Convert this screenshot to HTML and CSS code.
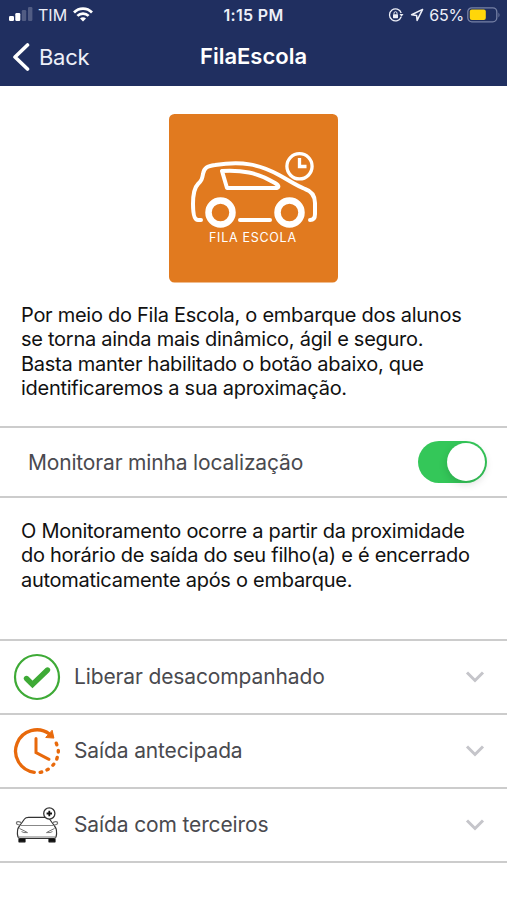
FILE: index.html
```
<!DOCTYPE html>
<html lang="pt-BR">
<head>
    <meta charset="UTF-8">
    <meta name="viewport" content="width=device-width, initial-scale=1.0">
    <title>FilaEscola</title>
    <link rel="stylesheet" href="styles.css">
</head>

<body>
    <header class="header">
        <div class="status">
            <div class="status_left">
                <svg class="icon_signal" width="24" height="16" viewBox="0 0 24 16" fill="#fff">
                    <rect x="0" y="9" width="5" height="5" rx="1.2"/>
                    <rect x="6.3" y="6" width="5" height="8" rx="1.2"/>
                    <rect x="12.8" y="3" width="4.4" height="11" rx="1.2" opacity=".22"/>
                    <rect x="19" y="0" width="4.4" height="14" rx="1.2" opacity=".22"/>
                </svg>
                <span class="status_carrier">TIM</span>
                <svg class="icon_wifi" width="20" height="16" viewBox="0 0 20 16" fill="none" stroke="#fff" stroke-width="2.7">
                    <path d="M1 5.500C6 .4 14 .4 19 5.500"/>
                    <path d="M4.4 8.900C7.4 5.800 12.6 5.800 15.6 8.900"/>
                    <path d="M10 14.400l-3-3c1.700-1.600 4.300-1.600 6 0z" fill="#fff" stroke="none"/>
                </svg>
            </div>
            <span class="status_time">1:15 PM</span>
            <div class="status_right">
                <svg class="icon_lock" width="16" height="16" viewBox="0 0 16 16" fill="none" stroke="#eef0f8" stroke-width="1.3">
                    <path d="M13.2 9.8A6 6 0 1 1 13.2 6"/>
                    <path d="M11.5 7h4l-2 2.8z" fill="#eef0f8" stroke="none"/>
                    <rect x="5" y="7.2" width="5" height="4" rx=".6" fill="#eef0f8" stroke="none"/>
                    <path d="M6 7.5V6.2a1.5 1.5 0 0 1 3 0v1.3" stroke-width="1"/>
                </svg>
                <svg class="icon_arrow" width="14" height="14" viewBox="0 0 14 14" fill="none" stroke="#eef0f8" stroke-width="1.5" stroke-linejoin="round">
                    <path d="M12.6 1.4L1.6 6.7l5 .7.5 5z"/>
                </svg>
                <span class="status_percent">65%</span>
                <svg class="icon_battery" width="34" height="16" viewBox="0 0 34 16">
                    <rect x=".8" y=".8" width="29" height="14" rx="4" fill="none" stroke="#7681a5" stroke-width="1.3"/>
                    <rect x="2.8" y="2.6" width="16" height="10.4" rx="2" fill="#ffd60a"/>
                    <path d="M31.5 5.5q2 2.500 0 5z" fill="#7681a5"/>
                </svg>
            </div>
        </div>
        <div class="navbar">
            <a class="navbar_back">
                <svg width="18" height="30" viewBox="0 0 18 30" fill="none" stroke="#fff" stroke-width="3.6" stroke-linecap="round" stroke-linejoin="round">
                    <path d="M15.5 3L3 15l12.5 12"/>
                </svg>
                <span>Back</span>
            </a>
            <h1 class="navbar_title">FilaEscola</h1>
        </div>
    </header>

    <main>
        <svg class="logo" width="169" height="169" viewBox="0 0 169 169">
            <rect width="169" height="168.500" rx="5.5" fill="#e17a1f"/>
            <g fill="none" stroke="#fff" stroke-width="4" stroke-linecap="round" stroke-linejoin="round">
                <path d="M32 106h-3c-4 0-5-8-5-16 0-9 1-16 5-20 4-4 4-5 5-10 1-6 4-8 12-9 27-4 44-1 64 10 11 6 18 11 26 14 9 3 10 9 10 14v11q0 6-5 6"/>
                <path d="M53 57c19-1 35 1 53 12 5 3 4 5 0 5H58z"/>
                <path d="M71 106h30"/>
                <circle cx="51.5" cy="98.5" r="12" stroke-width="6.5"/>
                <circle cx="120.500" cy="98.5" r="12" stroke-width="6.5"/>
                <circle cx="130.500" cy="52.3" r="12.6" stroke-width="3.3"/>
                <path d="M130.500 44v8.500h7" stroke-width="3.3" stroke-linecap="butt" stroke-linejoin="miter"/>
            </g>
            <text class="logo_text" x="40" y="127.500" textLength="87">FILA ESCOLA</text>
        </svg>

        <p class="text">
            <span class="line">Por meio do Fila Escola, o embarque dos alunos</span>
            <span class="line">se torna ainda mais dinâmico, ágil e seguro.</span>
            <span class="line">Basta manter habilitado o botão abaixo, que</span>
            <span class="line">identificaremos a sua aproximação.</span>
        </p>

        <div class="monitor">
            <span class="monitor_label">Monitorar minha localização</span>
            <div class="switch"><div class="switch_knob"></div></div>
        </div>

        <p class="text text_info">
            <span class="line">O Monitoramento ocorre a partir da proximidade</span>
            <span class="line">do horário de saída do seu filho(a) e é encerrado</span>
            <span class="line">automaticamente após o embarque.</span>
        </p>

        <div class="options">
            <div class="option">
                <svg class="option_icon" width="48" height="48" viewBox="0 0 48 48" fill="none">
                    <circle cx="24" cy="24" r="22" stroke="#3eaa36" stroke-width="2.2"/>
                    <path d="M13.5 25.500l6 6L34.5 17" stroke="#3eaa36" stroke-width="5.4" stroke-linecap="round"/>
                </svg>
                <span class="option_label">Liberar desacompanhado</span>
                <svg class="chevron" width="20" height="14" viewBox="0 0 20 14"><path d="M2 2.500l8 8 8-8"/></svg>
            </div>
            <div class="option">
                <svg class="option_icon" width="48" height="48" viewBox="0 0 48 48" fill="none" stroke="#e8690b" stroke-linecap="round">
                    <path d="M21.3 45.3A21.300 21.300 0 1 1 36.500 7" stroke-width="3.3"/>
                    <path d="M39.2 3.600l1.700 7.500-7.800-.6z" fill="#e8690b" stroke-width="1"/>
                    <path d="M23 11.500V25.500l13 6.800" stroke-width="3"/>
                    <path d="M43.3 16.2l.5 1.600M45.3 23.500v1.500M44.2 30.500l-.4 1.500M40.7 37.2l-.8 1M35.2 42.2l-1.200.7M28.7 45l-1.500.3" stroke-width="3.4"/>
                </svg>
                <span class="option_label">Saída antecipada</span>
                <svg class="chevron" width="20" height="14" viewBox="0 0 20 14"><path d="M2 2.500l8 8 8-8"/></svg>
            </div>
            <div class="option">
                <svg class="option_icon" width="48" height="48" viewBox="0 0 48 48" fill="none" stroke="#333" stroke-width="1.2" stroke-linejoin="round">
                    <path d="M5 36c-1-4-1-8 1.500-11L11.500 18c1-1.400 2-1.700 4-1.700h17c2 0 3 .3 4 1.700l5 7c2.500 3 2.500 7 1.500 11-.2 1-1 1.500-2.500 1.500H7.500c-1.500 0-2.300-.5-2.500-1.500z"/>
                    <path d="M7 24.500h34" stroke="#888"/>
                    <path d="M7 24c-2.500 0-4-1-3.500-2.500s3.500-1 5 .5M41 24c2.500 0 4-1 3.500-2.500s-3.500-1-5 .5" stroke="#777"/>
                    <path d="M6.500 27.500l5.500 2.700 2.500 1.400q-4 .4-6-1M41.500 27.500l-5.500 2.700-2.500 1.400q4 .4 6-1M5 36h38" stroke="#777" stroke-width="1"/>
                    <path d="M6 38h6v2.800H6zM36 38h6v2.800h-6z" fill="#111" stroke="#111"/>
                    <circle cx="36.300" cy="12.500" r="5.600" fill="#fff" stroke-width="1.3"/>
                    <path d="M36.300 9.800v5.400M33.600 12.500h5.400" stroke="#111" stroke-width="1.8"/>
                </svg>
                <span class="option_label">Saída com terceiros</span>
                <svg class="chevron" width="20" height="14" viewBox="0 0 20 14"><path d="M2 2.500l8 8 8-8"/></svg>
            </div>
        </div>
    </main>
</body>
</html>
```
FILE: styles.css
```
* {
    margin: 0;
    padding: 0;
    box-sizing: border-box;
}

body {
    background: #fff;
    color: #111;
    font-family: 'Inter', sans-serif;
    height: 900px;
    overflow: hidden;
}

svg {
    display: block;
    flex-shrink: 0;
}

.header {
    background: #202f60;
    color: #fff;
    height: 86px;
}

.status {
    display: grid;
    grid-template-columns: 1fr auto 1fr;
    align-items: center;
    height: 29px;
    padding: 0 6px 0 9px;
    font-size: 16px;
    color: #eef0f8;
}

.status_left,
.status_right {
    display: flex;
    align-items: center;
}

.status_right {
    justify-content: flex-end;
}

.status_carrier {
    margin: 0 6px 0 5px;
}

.status_time {
    padding-top: 1px;
    margin-right: 3px;
    font-weight: 600;
    font-size: 16px;
    letter-spacing: 0.3px;
}

.status_percent {
    letter-spacing: -0.2px;
}

.icon_arrow {
    margin: 0 5px 0 6px;
}

.icon_battery {
    margin-left: 3px;
}

.navbar {
    display: grid;
    grid-template-columns: 1fr auto 1fr;
    align-items: center;
    height: 56px;
    padding: 0 12px;
}

.navbar_back {
    display: flex;
    align-items: center;
    gap: 9px;
    font-size: 22px;
    letter-spacing: -0.3px;
    color: #eef0f8;
}

.navbar_title {
    padding-bottom: 2px;
    font-size: 22px;
    font-weight: 600;
}

.logo {
    margin: 28px auto 0;
}

.logo_text {
    font-size: 12.5px;
    fill: #fff;
}

.text {
    padding: 20px 21px 26px;
    font-size: 20px;
    line-height: 24.3px;
    letter-spacing: -0.27px;
}

.line {
    display: block;
    white-space: nowrap;
}

.monitor {
    display: flex;
    justify-content: space-between;
    align-items: center;
    height: 72px;
    padding: 0 20px 0 28px;
    border-top: 2px solid #ccc;
    border-bottom: 2px solid #ccc;
    color: #4a4a4f;
    font-size: 21px;
}

.monitor_label {
    letter-spacing: -0.17px;
}

.switch {
    width: 69px;
    height: 42px;
    padding: 2px;
    border-radius: 21px;
    background: #34c759;
    display: flex;
    justify-content: flex-end;
}

.switch_knob {
    width: 38px;
    height: 38px;
    border-radius: 50%;
    background: #fff;
    box-shadow: 0 3px 8px rgba(0, 0, 0, 0.15);
}

.text_info {
    height: 141px;
    padding-top: 21px;
}

.options {
    border-top: 2px solid #ccc;
}

.option {
    display: flex;
    align-items: center;
    height: 74px;
    padding: 0 22px 0 13px;
    border-bottom: 2px solid #ccc;
    color: #4a4a4f;
    font-size: 21px;
}

.option_icon {
    margin-bottom: 1px;
}

.option_label {
    flex: 1;
    margin-left: 13px;
    padding-bottom: 2px;
    letter-spacing: -0.13px;
}

.chevron path {
    fill: none;
    stroke: #c5c5ca;
    stroke-width: 3;
}
```
